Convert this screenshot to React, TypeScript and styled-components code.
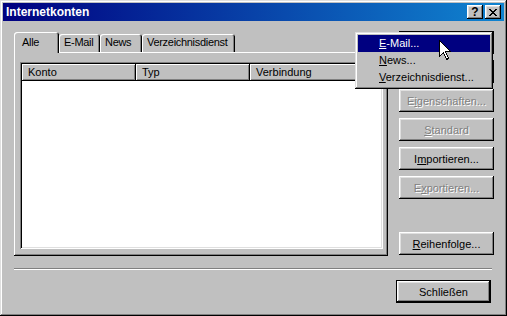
import React from 'react'
import styled, { createGlobalStyle, css } from 'styled-components'

const GlobalStyle = createGlobalStyle`
  html, body {
    margin: 0;
    padding: 0;
    background: #c0c0c0;
  }
  body {
    font-family: "Liberation Sans", Arial, sans-serif;
    font-size: 11px;
    color: #000;
  }
  * {
    box-sizing: border-box;
  }
`

const bevelOut = css`
  box-shadow: inset -1px -1px #000, inset 1px 1px #fff, inset -2px -2px #808080, inset 2px 2px #dfdfdf;
`

const Window = styled.div`
  width: 507px;
  height: 316px;
  padding: 3px;
  background: #c0c0c0;
  box-shadow: inset -1px -1px #000, inset 1px 1px #dfdfdf, inset -2px -2px #808080, inset 2px 2px #fff;
  display: flex;
  flex-direction: column;
`

const TitleBar = styled.div`
  height: 18px;
  display: flex;
  align-items: center;
  padding: 0 3px 0 3px;
  background: linear-gradient(to right, #000080, #1084d0);
`

const TitleText = styled.div`
  flex: 1;
  color: #fff;
  font-weight: bold;
  font-size: 12px;
`

const CaptionButton = styled.div<{ $gap?: number }>`
  width: 16px;
  height: 14px;
  margin-left: ${p => p.$gap || 0}px;
  background: #c0c0c0;
  ${bevelOut};
  display: flex;
  align-items: center;
  justify-content: center;
  font-weight: bold;
  font-size: 12px;
  line-height: 14px;
`

const Body = styled.div`
  flex: 1;
  display: flex;
  flex-direction: column;
  padding: 10px 0 0 11px;
`

const MainRow = styled.div`
  display: flex;
  gap: 11px;
`

const TabControl = styled.div`
  width: 374px;
  margin-top: 1px;
  display: flex;
  flex-direction: column;
`

const TabStrip = styled.div`
  height: 20px;
  display: flex;
  align-items: flex-end;
  position: relative;
  z-index: 1;
`

const Tab = styled.div<{ $active?: boolean; $w: number }>`
  width: ${p => p.$w}px;
  height: ${p => (p.$active ? 21 : 18)}px;
  padding: ${p => (p.$active ? '4px 0 0 8px' : '2px 0 0 5px')};
  margin-bottom: ${p => (p.$active ? -1 : 0)}px;
  letter-spacing: -0.3px;
  background: #c0c0c0;
  border-radius: 3px 3px 0 0;
  box-shadow: inset 1px 1px #fff, inset -1px 0 #000, inset -2px 0 #808080;
  white-space: nowrap;
`

const Panel = styled.div`
  height: 204px;
  padding: 10px 5px 7px 6px;
  box-shadow: inset -1px -1px #000, inset 1px 1px #fff, inset -2px -2px #808080;
  display: flex;
`

const ListView = styled.div`
  flex: 1;
  background: #fff;
  padding: 2px;
  box-shadow: inset 1px 1px #808080, inset -1px -1px #fff, inset 2px 2px #000, inset -2px -2px #dfdfdf;
  display: flex;
  flex-direction: column;
`

const HeaderRow = styled.div`
  height: 17px;
  display: flex;
  background: #c0c0c0;
`

const HeaderCell = styled.div<{ $w?: number }>`
  ${p => (p.$w ? `width: ${p.$w}px;` : 'flex: 1;')}
  height: 17px;
  line-height: 16px;
  padding-left: 6px;
  box-shadow: inset -1px -1px #000, inset 1px 1px #fff, inset -2px -2px #808080;
`

const ButtonColumn = styled.div`
  width: 95px;
  height: 224px;
  display: flex;
  flex-direction: column;
  gap: 6px;
  position: relative;
`

const PushButton = styled.button<{ $pressed?: boolean; $default?: boolean }>`
  width: 95px;
  height: 23px;
  padding: 0;
  border: ${p => (p.$default ? '1px solid #000' : 'none')};
  background: #c0c0c0;
  font-family: "Liberation Sans", Arial, sans-serif;
  font-size: 11px;
  color: #000;
  ${bevelOut};
  ${p =>
    p.$pressed &&
    css`
      box-shadow: inset 1px 1px #000, inset -1px -1px #000, inset 2px 2px #808080;
    `}

  &:disabled {
    color: #808080;
    text-shadow: 1px 1px 0 #fff;
  }
`

const BottomButton = styled(PushButton)`
  margin-top: auto;
`

const Menu = styled.div`
  position: absolute;
  left: -44px;
  top: 1px;
  width: 138px;
  padding: 3px;
  background: #c0c0c0;
  box-shadow: inset -1px -1px #000, inset 1px 1px #dfdfdf, inset -2px -2px #808080, inset 2px 2px #fff;
  z-index: 5;
`

const MenuItem = styled.div<{ $hot?: boolean }>`
  height: 17px;
  line-height: 17px;
  padding-left: 21px;
  background: ${p => (p.$hot ? '#000080' : 'transparent')};
  color: ${p => (p.$hot ? '#fff' : '#000')};
`

const Cursor = styled.svg`
  position: absolute;
  left: 84px;
  top: 8px;
`

const Separator = styled.div`
  width: 478px;
  margin-top: 12px;
  border-top: 1px solid #808080;
  border-bottom: 1px solid #fff;
`

const Footer = styled.div`
  width: 477px;
  margin-top: 10px;
  display: flex;
  justify-content: flex-end;
`

const Key = styled.span`
  text-decoration: underline;
  text-underline-offset: 1px;
`

const Label = ({ text, k }: { text: string; k?: number }) => {
  if (k === undefined) return <>{text}</>
  return (
    <>
      {text.slice(0, k)}
      <Key>{text[k]}</Key>
      {text.slice(k + 1)}
    </>
  )
}

export default function App() {
  return (
    <>
      <GlobalStyle />
      <Window>
        <TitleBar>
          <TitleText>Internetkonten</TitleText>
          <CaptionButton>?</CaptionButton>
          <CaptionButton $gap={2}>
            <svg width="8" height="7" viewBox="0 0 8 7" shapeRendering="crispEdges">
              <path d="M0 0h2v1h-2zM6 0h2v1h-2zM1 1h2v1h-2zM5 1h2v1h-2zM2 2h4v1h-4zM3 3h2v1h-2zM2 4h4v1h-4zM1 5h2v1h-2zM5 5h2v1h-2zM0 6h2v1h-2zM6 6h2v1h-2z" fill="#000" />
            </svg>
          </CaptionButton>
        </TitleBar>
        <Body>
          <MainRow>
            <TabControl>
              <TabStrip>
                <Tab $active $w={45}>Alle</Tab>
                <Tab $w={41}>E-Mail</Tab>
                <Tab $w={42}>News</Tab>
                <Tab $w={93}>Verzeichnisdienst</Tab>
              </TabStrip>
              <Panel>
                <ListView>
                  <HeaderRow>
                    <HeaderCell $w={114}>Konto</HeaderCell>
                    <HeaderCell $w={114}>Typ</HeaderCell>
                    <HeaderCell $w={115}>Verbindung</HeaderCell>
                    <HeaderCell />
                  </HeaderRow>
                </ListView>
              </Panel>
            </TabControl>
            <ButtonColumn>
              {/* Hinzufügen and Entfernen sit fully under the open menu */}
              <PushButton $pressed aria-label="Hinzufügen" />
              <PushButton disabled aria-label="Entfernen" />
              <PushButton disabled><Label text="Eigenschaften..." k={1} /></PushButton>
              <PushButton disabled><Label text="Standard" k={0} /></PushButton>
              <PushButton><Label text="Importieren..." k={1} /></PushButton>
              <PushButton disabled><Label text="Exportieren..." k={1} /></PushButton>
              <BottomButton><Label text="Reihenfolge..." k={0} /></BottomButton>
              <Menu>
                <MenuItem $hot><Label text="E-Mail..." k={0} /></MenuItem>
                <MenuItem><Label text="News..." k={0} /></MenuItem>
                <MenuItem><Label text="Verzeichnisdienst..." k={0} /></MenuItem>
                <Cursor width="12" height="20" viewBox="0 0 12 20" shapeRendering="crispEdges">
                  <path d="M0.5 0.5 V16.5 L4.5 12.5 L7.5 19.5 L9.5 18.5 L6.5 11.5 H11.5 Z" fill="#fff" stroke="#000" strokeWidth="1" />
                </Cursor>
              </Menu>
            </ButtonColumn>
          </MainRow>
          <Separator />
          <Footer>
            <PushButton $default>Schließen</PushButton>
          </Footer>
        </Body>
      </Window>
    </>
  )
}
